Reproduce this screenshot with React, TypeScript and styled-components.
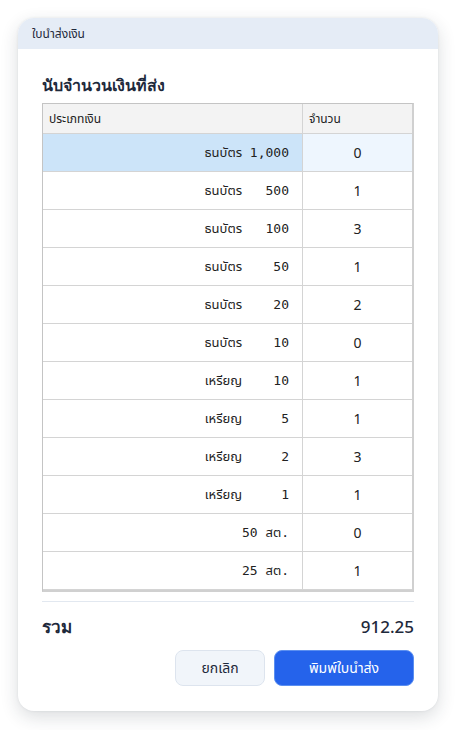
import React from 'react'
import styled, { createGlobalStyle } from 'styled-components'

const GlobalStyle = createGlobalStyle`
  html, body {
    margin: 0;
    padding: 0;
    background: #ffffff;
  }
  body {
    font-family: 'Noto Sans', 'Liberation Sans', sans-serif;
    color: #1e293b;
  }
`

interface Denomination {
  label: string
  count: number
}

// labels are padded so the amounts line up in the mono column
const rows: Denomination[] = [
  { label: 'ธนบัตร 1,000', count: 0 },
  { label: 'ธนบัตร   500', count: 1 },
  { label: 'ธนบัตร   100', count: 3 },
  { label: 'ธนบัตร    50', count: 1 },
  { label: 'ธนบัตร    20', count: 2 },
  { label: 'ธนบัตร    10', count: 0 },
  { label: 'เหรียญ    10', count: 1 },
  { label: 'เหรียญ     5', count: 1 },
  { label: 'เหรียญ     2', count: 3 },
  { label: 'เหรียญ     1', count: 1 },
  { label: '50 สต.', count: 0 },
  { label: '25 สต.', count: 1 },
]

const Page = styled.div`
  padding: 18px 18px 19px;
`

const Card = styled.section`
  width: 420px;
  height: 693px;
  box-sizing: border-box;
  background: #ffffff;
  border-radius: 16px;
  box-shadow: 0 6px 18px rgba(30, 41, 59, 0.16), 0 0 3px rgba(30, 41, 59, 0.08);
  overflow: hidden;
  display: flex;
  flex-direction: column;
`

const TitleBar = styled.header`
  flex-shrink: 0;
  height: 31px;
  background: #e5ecf6;
  display: flex;
  align-items: center;
  padding: 0 14px;
  font-family: 'Noto Sans Thai', 'Noto Sans', sans-serif;
  font-size: 12px;
  color: #1e293b;
`

const Body = styled.div`
  flex: 1;
  padding: 25px 24px 25px;
  display: flex;
  flex-direction: column;
`

const Heading = styled.h2`
  margin: 0 0 7px;
  font-size: 16px;
  font-weight: 700;
  line-height: 22px;
  color: #1e293b;
`

const GridFrame = styled.div`
  width: 372px;
  box-sizing: border-box;
  border: 1px solid #c4c4c4;
  border-right-width: 2px;
  border-bottom-width: 2px;
  border-right-color: #d0d0d0;
  border-bottom-color: #d0d0d0;
`

const Table = styled.table`
  width: 100%;
  border-collapse: collapse;
  table-layout: fixed;
`

const HeadCell = styled.th<{ $w?: number }>`
  width: ${p => (p.$w ? `${p.$w}px` : 'auto')};
  height: 29px;
  padding: 0 6px;
  background: #f3f3f3;
  border-right: 1px solid #d4d4d4;
  border-bottom: 1px solid #d4d4d4;
  text-align: left;
  font-family: 'Noto Sans Thai', 'Noto Sans', sans-serif;
  font-weight: 400;
  font-size: 12px;
  color: #222222;
  &:last-child {
    border-right: none;
  }
`

const TypeCell = styled.td<{ $active?: boolean }>`
  height: 37px;
  padding: 0 13px 0 6px;
  background: ${p => (p.$active ? '#cce4f9' : '#ffffff')};
  border-right: 1px solid #d4d4d4;
  border-bottom: 1px solid #d4d4d4;
  text-align: right;
  font-family: 'DejaVu Sans Mono', 'Noto Sans Thai', monospace;
  font-size: 13px;
  white-space: pre;
  color: #222222;
`

const CountCell = styled.td<{ $active?: boolean }>`
  height: 37px;
  padding: 0;
  background: ${p => (p.$active ? '#eef6fe' : '#ffffff')};
  border-bottom: 1px solid #d4d4d4;
  text-align: center;
  font-size: 14px;
  color: #222222;
`

const Divider = styled.hr`
  margin: 9px 0 0;
  border: none;
  border-top: 1px solid #e2e8f0;
`

const TotalRow = styled.div`
  display: flex;
  justify-content: space-between;
  align-items: center;
  height: 48px;
`

const TotalLabel = styled.span`
  font-size: 17px;
  font-weight: 700;
`

const TotalValue = styled.span`
  font-size: 17px;
  font-weight: 500;
`

const Actions = styled.div`
  display: flex;
  justify-content: flex-end;
  gap: 9px;
`

const Button = styled.button<{ $primary?: boolean }>`
  height: 36px;
  width: ${p => (p.$primary ? '140px' : '90px')};
  border-radius: 8px;
  border: 1px solid ${p => (p.$primary ? '#5b8ff0' : '#dde4ee')};
  background: ${p => (p.$primary ? '#2563eb' : '#f1f5fa')};
  color: ${p => (p.$primary ? '#ffffff' : '#1e293b')};
  font-family: 'Noto Sans Thai', 'Noto Sans', sans-serif;
  font-size: 14px;
  cursor: pointer;
`

export default function App() {
  const total = 912.25

  return (
    <>
      <GlobalStyle />
      <Page>
        <Card>
          <TitleBar>ใบนำส่งเงิน</TitleBar>
          <Body>
            <Heading>นับจำนวนเงินที่ส่ง</Heading>
            <GridFrame>
              <Table>
                <thead>
                  <tr>
                    <HeadCell $w={247}>ประเภทเงิน</HeadCell>
                    <HeadCell>จำนวน</HeadCell>
                  </tr>
                </thead>
                <tbody>
                  {rows.map((r, i) => (
                    <tr key={r.label}>
                      <TypeCell $active={i === 0}>{r.label}</TypeCell>
                      <CountCell $active={i === 0}>{r.count}</CountCell>
                    </tr>
                  ))}
                </tbody>
              </Table>
            </GridFrame>
            <Divider />
            <TotalRow>
              <TotalLabel>รวม</TotalLabel>
              <TotalValue>{total.toFixed(2)}</TotalValue>
            </TotalRow>
            <Actions>
              <Button type='button'>ยกเลิก</Button>
              <Button type='button' $primary>
                พิมพ์ใบนำส่ง
              </Button>
            </Actions>
          </Body>
        </Card>
      </Page>
    </>
  )
}
